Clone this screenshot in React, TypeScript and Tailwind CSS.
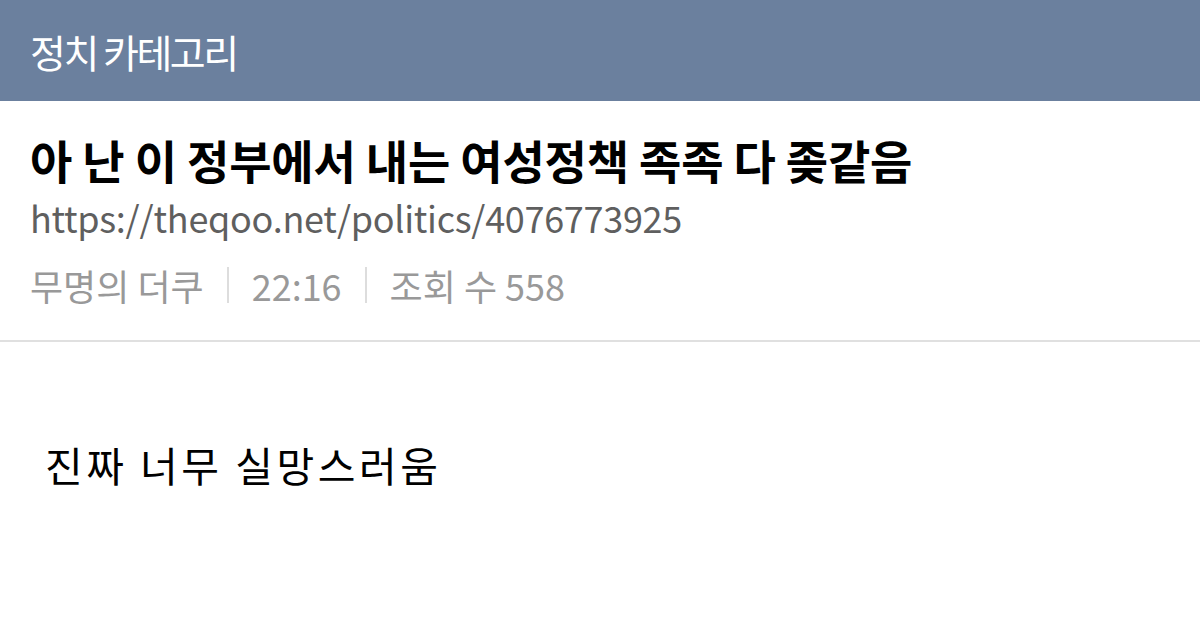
export default function App() {
  return (
    <div className="w-[1200px] h-[625px] bg-white overflow-hidden" style={{ fontFamily: '"Noto Sans CJK KR", "Noto Sans", sans-serif' }}>
      <div className="h-[101px] bg-[#6b809e] flex items-center px-[30px]">
        <h2 className="text-white text-[39px] leading-none tracking-[-2.5px] pt-[1px]">정치 카테고리</h2>
      </div>
      <div className="px-[30px] pt-[30px] pb-[32px] border-b-2 border-[#e0e0e0]">
        <h1 className="text-black text-[46px] font-bold leading-[56px] tracking-[-0.2px]">아 난 이 정부에서 내는 여성정책 족족 다 좆같음</h1>
        <p className="text-[#5f5f5f] text-[36px] leading-[46px] mt-[7px] tracking-[-0.3px]">https://theqoo.net/politics/4076773925</p>
        <div className="flex items-center text-[#999999] text-[36px] leading-[46px] mt-[22px]">
          <span>무명의 더쿠</span>
          <span className="w-[2px] h-[36px] bg-[#dddddd] mx-[23px]" />
          <span>22:16</span>
          <span className="w-[2px] h-[36px] bg-[#dddddd] mx-[23px]" />
          <span>조회 수 558</span>
        </div>
      </div>
      <div className="px-[45px] pt-[94px]">
        <p className="text-black text-[41px] leading-[56px] tracking-[3.5px]">진짜 너무 실망스러움</p>
      </div>
    </div>
  );
}
